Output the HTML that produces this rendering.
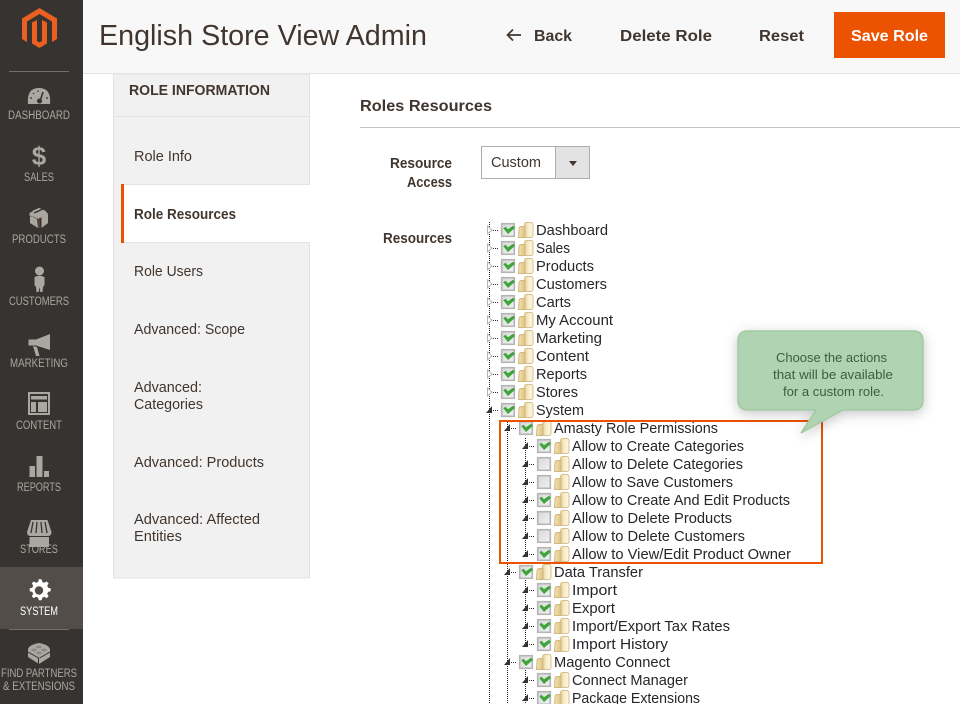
<!DOCTYPE html>
<html lang="en"><head><meta charset="utf-8"><title>Roles Resources</title>
<style>
html,body{margin:0;padding:0;background:#fff;width:960px;height:704px;overflow:hidden}
svg{display:block}
text{font-family:"Liberation Sans",Arial,sans-serif;}
.n{font-size:11.5px;fill:#aaa6a0}
.t{font-size:14.5px;fill:#26262b}
.m{font-size:14.5px;fill:#41362f}
.b{font-size:14.5px;fill:#41362f;font-weight:bold}
.h{font-size:16px;fill:#41362f;font-weight:bold}
.c{font-size:12.5px;fill:#3d5e3f}
</style></head><body>
<svg xmlns="http://www.w3.org/2000/svg" width="960" height="704" viewBox="0 0 960 704">
<defs>
<linearGradient id="gf" x1="0" y1="0" x2="1" y2="0"><stop offset="0" stop-color="#f3e4b4"/><stop offset="1" stop-color="#dcc184"/></linearGradient>
<linearGradient id="gp" x1="0" y1="0" x2="1" y2="0"><stop offset="0" stop-color="#e6d098"/><stop offset=".5" stop-color="#f8efcf"/><stop offset="1" stop-color="#fbf6e4"/></linearGradient>
<linearGradient id="gb" x1="0" y1="0" x2="1" y2="1"><stop offset="0" stop-color="#d8d8d8"/><stop offset="1" stop-color="#f2f2f2"/></linearGradient>
<filter id="sh" x="-20%" y="-20%" width="140%" height="150%"><feDropShadow dx="0" dy="3" stdDeviation="6" flood-color="#000" flood-opacity=".22"/></filter>
<g id="base">
<line x1="3" y1=".5" x2="9" y2=".5" stroke="#333" stroke-dasharray="1 1"/>
<rect x="34.500" y="-7.500" width="8.500" height="15" rx="2" fill="url(#gp)" stroke="#d9c088"/>
<path d="M28.500 7.500 L29 -1 Q29.200 -3.500 31.500 -3.500 H35 V7.500 Z" fill="url(#gf)" stroke="#d2b77a"/>
</g>
<rect id="box" x="11.700" y="-6.300" width="12.600" height="12.600" fill="url(#gb)" stroke="#b4b4b4" stroke-width="1.600"/>
<path id="ck" d="M13.300 -1.800 L15.500 -3.300 L18 -.8 L23 -4.200 L25 -2.200 L18 4 Z" fill="#3ea43c"/>
<path id="tc" d="M-2.500 -4 L2 0 L-2.500 4 Z" fill="#fff" stroke="#b5b5b5"/>
<path id="to" d="M2 -4 V3 H-4 Z" fill="#333"/>
<g id="cl"><use href="#tc"/><use href="#base"/><use href="#box"/><use href="#ck"/></g>
<g id="on"><use href="#to"/><use href="#base"/><use href="#box"/><use href="#ck"/></g>
<g id="of"><use href="#to"/><use href="#base"/><use href="#box"/></g>
</defs>

<rect width="960" height="704" fill="#fff"/>

<!-- header -->
<rect x="83" width="877" height="73" fill="#f8f8f8"/>
<rect x="83" y="73" width="877" height="1" fill="#e3e3e3"/>
<text x="99" y="45" font-size="29" fill="#41362f" textLength="328" lengthAdjust="spacingAndGlyphs">English Store View Admin</text>
<path d="M521 35 H507.500 M513 29.500 L507.500 35 L513 40.500" fill="none" stroke="#41362f" stroke-width="1.700"/>
<text class="b" x="534" y="41" style="font-size:16px" textLength="38" lengthAdjust="spacingAndGlyphs">Back</text>
<text class="b" x="620" y="41" style="font-size:16px" textLength="92" lengthAdjust="spacingAndGlyphs">Delete Role</text>
<text class="b" x="759" y="41" style="font-size:16px" textLength="45" lengthAdjust="spacingAndGlyphs">Reset</text>
<rect x="834" y="12" width="111" height="46" fill="#eb5202"/>
<text x="851" y="41" font-size="16" font-weight="bold" fill="#fff" textLength="77" lengthAdjust="spacingAndGlyphs">Save Role</text>

<!-- sidebar -->
<rect width="83" height="704" fill="#373330"/>
<rect y="567" width="83" height="62" fill="#524d49"/>
<rect x="9" y="71" width="60" height="1" fill="#736e69"/>
<rect x="9" y="629" width="60" height="1" fill="#736e69"/>
<path fill="#eb5f20" d="M39.500 8 L57 18.500 V39 L52 42 V21.500 L39.500 14 L27 21.500 V42 L22 39 V18.500 Z"/>
<path fill="#eb5f20" d="M39.500 48 L32 43.500 V22.500 L37 20 V41 L39.500 42.500 L42 41 V20 L47 22.500 V43.500 Z"/>
<g fill="#aaa6a0">
<path d="M28 104 Q26.500 88 39 88 Q51.500 88 50 104 Z"/>
<path d="M39.500 103 L43 92" stroke="#373330" stroke-width="1.600"/>
<circle cx="39.500" cy="101" r="2.500" fill="#373330"/>
<path d="M30 98 l2 0 M33 93 l1 1 M38 90.500 v1.500 M46 98 l2 0" stroke="#373330" stroke-width="1.200"/>
<text x="39" y="165" font-size="26" font-weight="bold" text-anchor="middle" fill="#aaa6a0">$</text>
<path d="M39 208 L46 211 L32 217 L29.500 215.500 V213 Z M41.500 217 L48 214 V223 L41.500 228 Z M37 219 L30 215.500 V223 L38 228 Z"/>
<path d="M33 210.500 L39 208 L46.500 212 L48 214 L41 217.500 L38 219 L30 215 Z"/>
<path d="M39 218 V228" stroke="#7b5048" stroke-width="1"/>
<path d="M34 213 L43 209" stroke="#373330" stroke-width="1.500"/>
<circle cx="39.500" cy="271" r="4.500"/>
<path d="M34.500 277 Q39.500 274.500 44.500 277 L44.500 285 L43 287 L42.500 292 H40.300 L39.500 287 L38.700 292 H36.500 L36 287 L34.500 285 Z"/>
<path d="M50 334 V350 L36 345.500 H28.500 V339.500 H36 Z"/>
<path d="M33 346 L36 356 H39.500 L37 347 Z"/>
<rect x="29" y="393" width="20" height="21" fill="none" stroke="#aaa6a0" stroke-width="2"/>
<path d="M31 396 H47 V399.500 H31 Z M31 402 H36 V412 H31 Z M38 402 H47 V412 H38 Z"/>
<rect x="36.500" y="456" width="6" height="21"/>
<rect x="44" y="471" width="5" height="6"/>
<rect x="29.500" y="466" width="5.500" height="11"/>
<path d="M31 520 H47.500 L51.500 532 Q51.500 536 48 536 H30.500 Q27 536 27 532 Z"/>
<path d="M29.500 537 H49 V547 H29.500 Z"/>
<path d="M33 522 L31 533 M37 522 L36 533 M41 522 L42 533 M45 522 L47 533" stroke="#373330" stroke-width="1.300"/>
<path d="M39 643 Q50 645 50 650 V657 L39 664 L28 657 V650 Q28 645 39 643 Z"/>
<path d="M28 652 L38.500 658 V664 M50 652 L39.500 658" stroke="#373330" stroke-width="1" fill="none"/>
<ellipse cx="34" cy="650" rx="2.800" ry="1.400" fill="#8c8883"/><ellipse cx="44" cy="650" rx="2.800" ry="1.400" fill="#8c8883"/><ellipse cx="39" cy="647" rx="2.800" ry="1.400" fill="#8c8883"/><ellipse cx="39" cy="653" rx="2.800" ry="1.400" fill="#8c8883"/>
</g>
<path fill="#fff" d="M39 579 l2.600 .4 .7 2.600 2 .8 2.300 -1.300 2 1.900 -1.400 2.300 .9 2.100 2.600 .6 v2.800 l-2.600 .7 -.9 2 1.400 2.300 -2 2 -2.300 -1.400 -2 .9 -.7 2.600 h-2.800 l-.7 -2.600 -2 -.9 -2.300 1.400 -2 -2 1.400 -2.300 -.9 -2 -2.600 -.7 v-2.800 l2.600 -.6 .9 -2.100 -1.400 -2.300 2 -1.900 2.300 1.300 2 -.8 .7 -2.600 z"/>
<circle cx="39" cy="590.500" r="4.200" fill="#524d49"/>
<text class="n" x="8" y="119" textLength="62" lengthAdjust="spacingAndGlyphs">DASHBOARD</text>
<text class="n" x="24" y="181" textLength="30" lengthAdjust="spacingAndGlyphs">SALES</text>
<text class="n" x="12" y="243" textLength="54" lengthAdjust="spacingAndGlyphs">PRODUCTS</text>
<text class="n" x="9" y="305" textLength="60" lengthAdjust="spacingAndGlyphs">CUSTOMERS</text>
<text class="n" x="10" y="367" textLength="58" lengthAdjust="spacingAndGlyphs">MARKETING</text>
<text class="n" x="16" y="429" textLength="46" lengthAdjust="spacingAndGlyphs">CONTENT</text>
<text class="n" x="17" y="491" textLength="44" lengthAdjust="spacingAndGlyphs">REPORTS</text>
<text class="n" x="20" y="553" textLength="38" lengthAdjust="spacingAndGlyphs">STORES</text>
<text class="n" x="20" y="615" style="fill:#fff" textLength="38" lengthAdjust="spacingAndGlyphs">SYSTEM</text>
<text class="n" x="1" y="677" textLength="76" lengthAdjust="spacingAndGlyphs">FIND PARTNERS</text>
<text class="n" x="3" y="690" textLength="72" lengthAdjust="spacingAndGlyphs">&amp; EXTENSIONS</text>

<!-- left panel -->
<rect x="113.500" y="74" width="196" height="504" fill="#f1f1f1" stroke="#e3e3e3"/>
<rect x="114" y="116" width="195" height="1" fill="#e3e3e3"/>
<rect x="121" y="184" width="189" height="59" fill="#fff"/>
<rect x="121" y="184" width="3" height="59" fill="#eb5202"/>
<rect x="124" y="184" width="186" height="1" fill="#e3e3e3"/>
<rect x="124" y="242" width="186" height="1" fill="#e3e3e3"/>
<text class="b" x="129" y="95" textLength="141" lengthAdjust="spacingAndGlyphs">ROLE INFORMATION</text>
<text class="m" x="134" y="161" textLength="58" lengthAdjust="spacingAndGlyphs">Role Info</text>
<text class="b" x="134" y="219" textLength="102" lengthAdjust="spacingAndGlyphs">Role Resources</text>
<text class="m" x="134" y="276" textLength="69" lengthAdjust="spacingAndGlyphs">Role Users</text>
<text class="m" x="134" y="334" textLength="111" lengthAdjust="spacingAndGlyphs">Advanced: Scope</text>
<text class="m" x="134" y="392" textLength="68" lengthAdjust="spacingAndGlyphs">Advanced:</text>
<text class="m" x="134" y="409" textLength="69" lengthAdjust="spacingAndGlyphs">Categories</text>
<text class="m" x="134" y="467" textLength="130" lengthAdjust="spacingAndGlyphs">Advanced: Products</text>
<text class="m" x="134" y="524" textLength="126" lengthAdjust="spacingAndGlyphs">Advanced: Affected</text>
<text class="m" x="134" y="541" textLength="48" lengthAdjust="spacingAndGlyphs">Entities</text>

<!-- main -->
<text class="h" x="360" y="111" textLength="132" lengthAdjust="spacingAndGlyphs">Roles Resources</text>
<rect x="360" y="127" width="600" height="1" fill="#c6c1bd"/>
<text class="b" x="390" y="168" textLength="62" lengthAdjust="spacingAndGlyphs">Resource</text>
<text class="b" x="407" y="187" textLength="45" lengthAdjust="spacingAndGlyphs">Access</text>
<text class="b" x="383" y="243" textLength="69" lengthAdjust="spacingAndGlyphs">Resources</text>
<rect x="481.500" y="146.500" width="108" height="32" fill="#fff" stroke="#adadad"/>
<rect x="555" y="147" width="34" height="31" fill="#e3e3e3"/>
<rect x="555" y="147" width="1" height="31" fill="#adadad"/>
<path d="M569 161 H577 L573 166 Z" fill="#41362f"/>
<text class="m" x="491" y="167" textLength="50" lengthAdjust="spacingAndGlyphs">Custom</text>

<!-- tree lines -->
<g stroke="#222" stroke-dasharray="1 1" fill="none">
<line x1="489.500" y1="222" x2="489.500" y2="704"/>
<line x1="507.500" y1="420" x2="507.500" y2="704"/>
<line x1="525.500" y1="438" x2="525.500" y2="554"/>
<line x1="525.500" y1="580" x2="525.500" y2="644"/>
<line x1="525.500" y1="670" x2="525.500" y2="704"/>
</g>

<!-- tree icons -->
<use href="#cl" x="490" y="230"/><use href="#cl" x="490" y="248"/><use href="#cl" x="490" y="266"/><use href="#cl" x="490" y="284"/><use href="#cl" x="490" y="302"/><use href="#cl" x="490" y="320"/><use href="#cl" x="490" y="338"/><use href="#cl" x="490" y="356"/><use href="#cl" x="490" y="374"/><use href="#cl" x="490" y="392"/>
<use href="#on" x="490" y="410"/>
<use href="#on" x="508" y="428"/>
<use href="#on" x="526" y="446"/><use href="#of" x="526" y="464"/><use href="#of" x="526" y="482"/><use href="#on" x="526" y="500"/><use href="#of" x="526" y="518"/><use href="#of" x="526" y="536"/><use href="#on" x="526" y="554"/>
<use href="#on" x="508" y="572"/>
<use href="#on" x="526" y="590"/><use href="#on" x="526" y="608"/><use href="#on" x="526" y="626"/><use href="#on" x="526" y="644"/>
<use href="#on" x="508" y="662"/>
<use href="#on" x="526" y="680"/><use href="#on" x="526" y="698"/>

<!-- tree text -->
<text class="t" x="536" y="235" textLength="72" lengthAdjust="spacingAndGlyphs">Dashboard</text>
<text class="t" x="536" y="253" textLength="34" lengthAdjust="spacingAndGlyphs">Sales</text>
<text class="t" x="536" y="271" textLength="58" lengthAdjust="spacingAndGlyphs">Products</text>
<text class="t" x="536" y="289" textLength="71" lengthAdjust="spacingAndGlyphs">Customers</text>
<text class="t" x="536" y="307" textLength="35" lengthAdjust="spacingAndGlyphs">Carts</text>
<text class="t" x="536" y="325" textLength="77" lengthAdjust="spacingAndGlyphs">My Account</text>
<text class="t" x="536" y="343" textLength="66" lengthAdjust="spacingAndGlyphs">Marketing</text>
<text class="t" x="536" y="361" textLength="53" lengthAdjust="spacingAndGlyphs">Content</text>
<text class="t" x="536" y="379" textLength="51" lengthAdjust="spacingAndGlyphs">Reports</text>
<text class="t" x="536" y="397" textLength="42" lengthAdjust="spacingAndGlyphs">Stores</text>
<text class="t" x="536" y="415" textLength="48" lengthAdjust="spacingAndGlyphs">System</text>
<text class="t" x="554" y="433" textLength="164" lengthAdjust="spacingAndGlyphs">Amasty Role Permissions</text>
<text class="t" x="572" y="451" textLength="172" lengthAdjust="spacingAndGlyphs">Allow to Create Categories</text>
<text class="t" x="572" y="469" textLength="171" lengthAdjust="spacingAndGlyphs">Allow to Delete Categories</text>
<text class="t" x="572" y="487" textLength="161" lengthAdjust="spacingAndGlyphs">Allow to Save Customers</text>
<text class="t" x="572" y="505" textLength="218" lengthAdjust="spacingAndGlyphs">Allow to Create And Edit Products</text>
<text class="t" x="572" y="523" textLength="160" lengthAdjust="spacingAndGlyphs">Allow to Delete Products</text>
<text class="t" x="572" y="541" textLength="173" lengthAdjust="spacingAndGlyphs">Allow to Delete Customers</text>
<text class="t" x="572" y="559" textLength="219" lengthAdjust="spacingAndGlyphs">Allow to View/Edit Product Owner</text>
<text class="t" x="554" y="577" textLength="89" lengthAdjust="spacingAndGlyphs">Data Transfer</text>
<text class="t" x="572" y="595" textLength="45" lengthAdjust="spacingAndGlyphs">Import</text>
<text class="t" x="572" y="613" textLength="43" lengthAdjust="spacingAndGlyphs">Export</text>
<text class="t" x="572" y="631" textLength="158" lengthAdjust="spacingAndGlyphs">Import/Export Tax Rates</text>
<text class="t" x="572" y="649" textLength="96" lengthAdjust="spacingAndGlyphs">Import History</text>
<text class="t" x="554" y="667" textLength="116" lengthAdjust="spacingAndGlyphs">Magento Connect</text>
<text class="t" x="572" y="685" textLength="116" lengthAdjust="spacingAndGlyphs">Connect Manager</text>
<text class="t" x="572" y="703" textLength="128" lengthAdjust="spacingAndGlyphs">Package Extensions</text>

<!-- highlight -->
<rect x="500" y="421" width="322" height="142" fill="none" stroke="#eb5202" stroke-width="2"/>

<!-- callout -->
<path d="M748 331 H913 Q923 331 923 341 V400 Q923 410 913 410 H843 L801 433 L816 410 H748 Q738 410 738 400 V341 Q738 331 748 331 Z" fill="#b0d3b1" stroke="#a1c9a3" stroke-width="1.500" filter="url(#sh)"/>
<text class="c" x="776" y="362" textLength="111" lengthAdjust="spacingAndGlyphs">Choose the actions</text>
<text class="c" x="773" y="379" textLength="120" lengthAdjust="spacingAndGlyphs">that will be available</text>
<text class="c" x="783" y="396" textLength="101" lengthAdjust="spacingAndGlyphs">for a custom role.</text>
</svg>
</body></html>
